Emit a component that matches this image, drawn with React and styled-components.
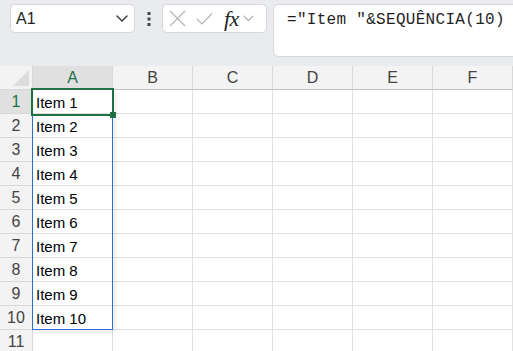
import React from 'react';
import styled, { createGlobalStyle } from 'styled-components';

const GlobalStyle = createGlobalStyle`
  body {
    margin: 0;
    background: #ffffff;
    font-family: "Liberation Sans", Arial, sans-serif;
    overflow: hidden;
  }
`;

const Page = styled.div`
  width: 513px;
  height: 351px;
  overflow: hidden;
`;

const Toolbar = styled.div`
  height: 66px;
  background: #e9ebee;
  display: flex;
  align-items: flex-start;
  padding: 4px 0 0 10px;
  box-sizing: border-box;
  overflow: hidden;
`;

const Box = styled.div`
  height: 29px;
  box-sizing: border-box;
  background: #fff;
  border: 1px solid #d6d8dc;
  border-radius: 5px;
  display: flex;
  align-items: center;
  flex-shrink: 0;
`;

const NameBox = styled(Box)`
  width: 125px;
  padding: 0 6px 0 5px;
  justify-content: space-between;
  font-size: 16px;
  color: #1f1f1f;
`;

const Dots = styled.div`
  width: 27px;
  display: flex;
  justify-content: center;
  padding-top: 8px;
  flex-shrink: 0;
`;

const FxBox = styled(Box)`
  width: 105px;
  padding: 0 4px 0 6px;
  gap: 10px;
`;

const FxLabel = styled.span`
  font-family: "Liberation Serif", "Times New Roman", serif;
  font-style: italic;
  font-size: 22px;
  color: #222;
  margin-left: 1px;
  margin-right: -6px;
  letter-spacing: -0.5px;
`;

const FormulaBox = styled(Box)`
  height: 53px;
  width: 260px;
  margin-left: 6px;
  border-radius: 6px;
  align-items: flex-start;
  padding: 6px 0 0 13px;
  font-family: "Liberation Mono", "Courier New", monospace;
  font-size: 16px;
  letter-spacing: 0.3px;
  color: #1f1f1f;
  white-space: pre;
`;

const Grid = styled.div`
  position: relative;
  display: grid;
  grid-template-columns: 33px repeat(6, 80px);
  grid-auto-rows: 24px;
`;

const Cell = styled.div`
  box-sizing: border-box;
  border-right: 1px solid #e1e1e1;
  border-bottom: 1px solid #e1e1e1;
  display: flex;
  align-items: center;
  padding: 1px 0 0 3px;
  font-size: 15px;
  color: #000;
  white-space: nowrap;
`;

const Head = styled.div`
  box-sizing: border-box;
  background: ${p => (p.$active ? '#e0e0e0' : '#f3f3f3')};
  color: ${p => (p.$active ? '#1e7145' : '#444')};
  border-right: 1px solid #d8d8d8;
  border-bottom: 1px solid ${p => (p.$col ? '#c4c4c4' : '#d8d8d8')};
  display: flex;
  align-items: center;
  justify-content: center;
  padding-top: 1px;
  font-size: 16px;
`;

const Corner = styled(Head)`
  position: relative;
  &::after {
    content: '';
    position: absolute;
    right: 3px;
    bottom: 3px;
    border-style: solid;
    border-width: 0 0 16px 16px;
    border-color: transparent transparent #dcdcdc transparent;
  }
`;

const Range = styled.div`
  position: absolute;
  grid-column: 2 / 3;
  grid-row: 2 / 12;
  top: 0;
  bottom: 0;
  left: -1px;
  right: 0;
  border: 1px solid #2c6fd1;
  border-top: none;
  pointer-events: none;
  box-shadow: 3px 2px 5px rgba(0, 0, 0, 0.08);
`;

const Active = styled.div`
  position: absolute;
  grid-column: 2 / 3;
  grid-row: 2 / 3;
  top: -2px;
  left: -2px;
  right: -1px;
  bottom: -2px;
  border: 2px solid #1e7145;
  pointer-events: none;
`;

const Handle = styled.div`
  position: absolute;
  right: -4px;
  bottom: -4px;
  width: 6px;
  height: 6px;
  background: #1e7145;
`;

const Chevron = ({ size = 12, color = '#333', width = 1.4 }) => (
  <svg width={size} height={size * 0.6} viewBox="0 0 12 7">
    <path d="M1 1l5 5 5-5" fill="none" stroke={color} strokeWidth={width} strokeLinecap="round" strokeLinejoin="round" />
  </svg>
);

const columns = ['A', 'B', 'C', 'D', 'E', 'F'];
const rows = Array.from({ length: 11 }, (_, i) => i + 1);

export default function App() {
  return (
    <Page>
      <GlobalStyle />
      <Toolbar>
        <NameBox>
          <span>A1</span>
          <Chevron />
        </NameBox>
        <Dots>
          <svg width="4" height="14" viewBox="0 0 4 14">
            <rect x="0.5" y="0" width="3" height="3" rx="0.5" fill="#444" />
            <rect x="0.5" y="5.5" width="3" height="3" rx="0.5" fill="#444" />
            <rect x="0.5" y="11" width="3" height="3" rx="0.5" fill="#444" />
          </svg>
        </Dots>
        <FxBox>
          <svg width="17" height="17" viewBox="0 0 17 17">
            <path d="M1 1l15 15M16 1L1 16" stroke="#b4b4b4" strokeWidth="1.2" fill="none" />
          </svg>
          <svg width="17" height="14" viewBox="0 0 17 14">
            <path d="M1 7l5 5L16 1.5" stroke="#b4b4b4" strokeWidth="1.2" fill="none" />
          </svg>
          <FxLabel>fx</FxLabel>
          <Chevron size={11} color="#999" width={1.1} />
        </FxBox>
        <FormulaBox>{'="Item "&SEQUÊNCIA(10)'}</FormulaBox>
      </Toolbar>
      <Grid>
        <Corner />
        {columns.map(c => (
          <Head key={c} $col $active={c === 'A'}>{c}</Head>
        ))}
        {rows.map(r => (
          <React.Fragment key={r}>
            <Head $active={r === 1}>{r}</Head>
            {columns.map(c => (
              <Cell key={c}>{c === 'A' && r <= 10 ? `Item ${r}` : ''}</Cell>
            ))}
          </React.Fragment>
        ))}
        <Range />
        <Active>
          <Handle />
        </Active>
      </Grid>
    </Page>
  );
}
